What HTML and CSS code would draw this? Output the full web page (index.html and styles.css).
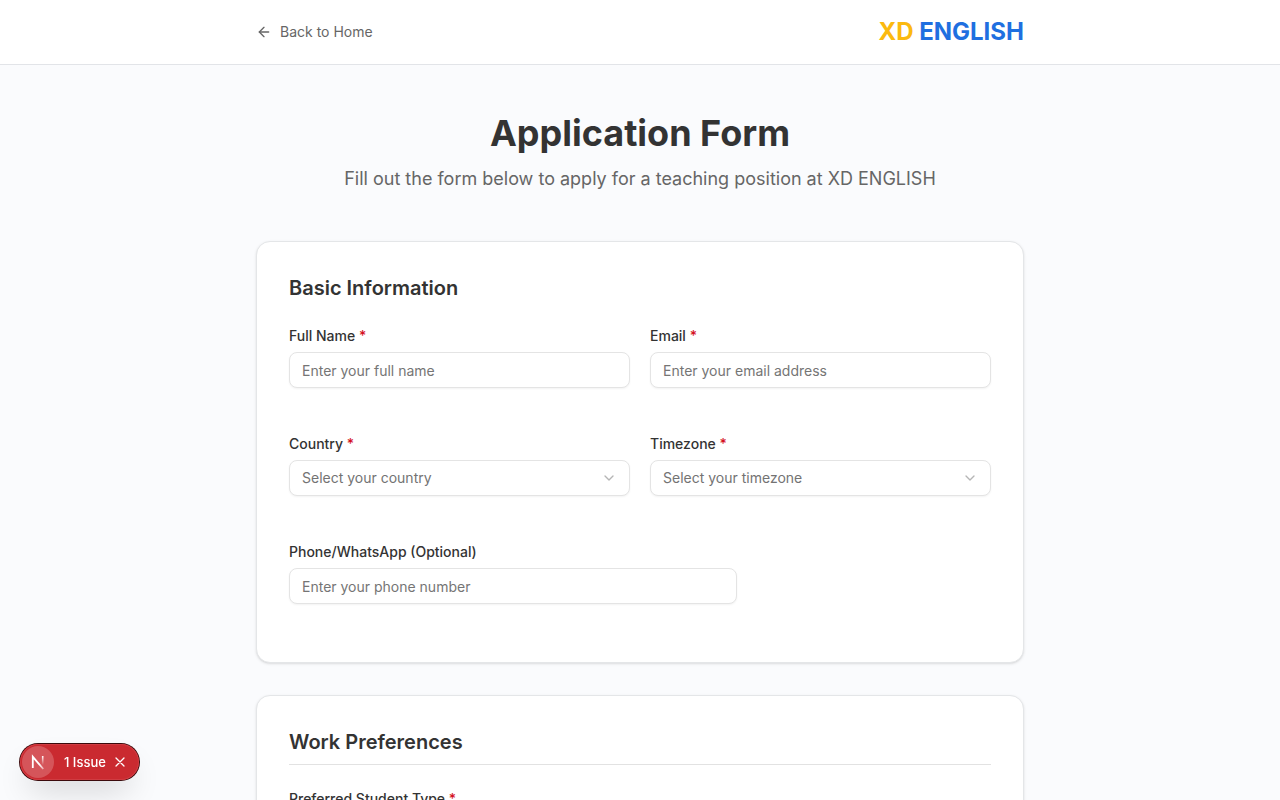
FILE: index.html
```html
<!DOCTYPE html>
<html lang="en">
<head>
<meta charset="UTF-8">
<meta name="viewport" content="width=device-width, initial-scale=1.0">
<title>Application Form</title>
<link rel="stylesheet" href="styles.css">
</head>
<body>
  <header class="site-header">
    <div class="container header-inner">
      <a class="back-link" href="#">
        <svg width="16" height="16" viewBox="0 0 24 24" fill="none" stroke="currentColor" stroke-width="2" stroke-linecap="round" stroke-linejoin="round" aria-hidden="true"><path d="m12 19-7-7 7-7"/><path d="M19 12H5"/></svg>
        Back to Home
      </a>
      <div class="logo"><span class="logo-xd">XD</span> ENGLISH</div>
    </div>
  </header>

  <main class="container">
    <div class="page-title">
      <h1>Application Form</h1>
      <p>Fill out the form below to apply for a teaching position at XD ENGLISH</p>
    </div>

    <form>
      <section class="card">
        <h2>Basic Information</h2>
        <div class="fields">
          <div class="field">
            <label for="fullName">Full Name <span class="required">*</span></label>
            <input type="text" id="fullName" name="fullName" placeholder="Enter your full name">
            <p class="field-error"></p>
          </div>
          <div class="field">
            <label for="email">Email <span class="required">*</span></label>
            <input type="email" id="email" name="email" placeholder="Enter your email address">
            <p class="field-error"></p>
          </div>
          <div class="field">
            <label for="country">Country <span class="required">*</span></label>
            <div class="select">
              <select id="country" name="country">
                <option value="">Select your country</option>
              </select>
              <svg width="16" height="16" viewBox="0 0 24 24" fill="none" stroke="currentColor" stroke-width="2" stroke-linecap="round" stroke-linejoin="round" aria-hidden="true"><path d="m6 9 6 6 6-6"/></svg>
            </div>
            <p class="field-error"></p>
          </div>
          <div class="field">
            <label for="timezone">Timezone <span class="required">*</span></label>
            <div class="select">
              <select id="timezone" name="timezone">
                <option value="">Select your timezone</option>
              </select>
              <svg width="16" height="16" viewBox="0 0 24 24" fill="none" stroke="currentColor" stroke-width="2" stroke-linecap="round" stroke-linejoin="round" aria-hidden="true"><path d="m6 9 6 6 6-6"/></svg>
            </div>
            <p class="field-error"></p>
          </div>
          <div class="field field-wide">
            <label for="phone">Phone/WhatsApp (Optional)</label>
            <input type="tel" id="phone" name="phone" placeholder="Enter your phone number">
            <p class="field-error"></p>
          </div>
        </div>
      </section>

      <section class="card">
        <h2 class="ruled">Work Preferences</h2>
        <fieldset>
          <legend>Preferred Student Type <span class="required">*</span></legend>
        </fieldset>
      </section>
    </form>
  </main>

  <div class="issues">
    <button type="button" class="issues-logo" aria-label="Open dev tools">
      <svg width="32" height="32" viewBox="0 0 32 32" fill="none" aria-hidden="true">
        <defs>
          <linearGradient id="fadeDiagonal" x1="19" y1="17" x2="23" y2="23" gradientUnits="userSpaceOnUse">
            <stop stop-color="#fff"/>
            <stop offset="1" stop-color="#fff" stop-opacity="0.4"/>
          </linearGradient>
          <linearGradient id="fadeStem" x1="21" y1="10" x2="21" y2="19" gradientUnits="userSpaceOnUse">
            <stop stop-color="#fff"/>
            <stop offset="1" stop-color="#fff" stop-opacity="0"/>
          </linearGradient>
        </defs>
        <path d="M10.8 22V10.8L21.3 23" stroke="url(#fadeDiagonal)" stroke-width="1.8"/>
        <path d="M20.7 10v9" stroke="url(#fadeStem)" stroke-width="1.6"/>
      </svg>
    </button>
    <button type="button" class="issues-open">1 Issue</button>
    <button type="button" class="issues-close" aria-label="Close">
      <svg width="10" height="10" viewBox="0 0 10 10" stroke="currentColor" stroke-width="1.3" stroke-linecap="round" aria-hidden="true"><path d="M1 1l8 8M9 1L1 9"/></svg>
    </button>
  </div>
</body>
</html>
```
FILE: styles.css
```css
* {
  box-sizing: border-box;
}
body {
  margin: 0;
  font-family: Inter, sans-serif;
  font-size: 14px;
  line-height: 20px;
  color: #333;
  background-color: #fafbfd;
}
h1, h2, p {
  margin: 0;
}
button, input, select {
  font: inherit;
}
.container {
  max-width: 768px;
  margin: 0 auto;
}

/* header */
.site-header {
  background-color: #fff;
  border-bottom: 1px solid #e2e4e8;
}
.header-inner {
  display: flex;
  align-items: center;
  justify-content: space-between;
  padding: 16px 0;
}
.back-link {
  display: flex;
  align-items: center;
  gap: 8px;
  color: #666;
  text-decoration: none;
}
.logo {
  font-size: 24px;
  line-height: 32px;
  font-weight: 700;
  color: #1f6fe0;
}
.logo-xd {
  color: #fbb90f;
}

/* title */
main {
  padding: 48px 0;
}
.page-title {
  text-align: center;
  margin-bottom: 48px;
}
.page-title h1 {
  font-size: 36px;
  line-height: 40px;
  font-weight: 700;
  margin-bottom: 12px;
}
.page-title p {
  font-size: 18px;
  line-height: 28px;
  color: #666;
}

/* form */
.card {
  background-color: #fff;
  border: 1px solid #e4e6e8;
  border-radius: 14px;
  padding: 32px;
  margin-bottom: 32px;
  box-shadow: 0 1px 3px rgba(0,0,0,0.1), 0 1px 2px -1px rgba(0,0,0,0.1);
}
.card h2 {
  font-size: 20px;
  line-height: 28px;
  font-weight: 600;
  margin-bottom: 24px;
}
.card h2.ruled {
  padding-bottom: 8px;
  border-bottom: 1px solid #e2e2e2;
}
.fields {
  display: grid;
  grid-template-columns: 1fr 1fr;
  gap: 20px;
}
.field {
  display: flex;
  flex-direction: column;
  gap: 6px;
}
.field-wide {
  grid-column: 1 / -1;
}
.field-wide input {
  max-width: 448px;
}
.field-error {
  min-height: 20px;
  color: #d4183d;
}
label, legend {
  font-weight: 500;
}
.required {
  color: #d4101e;
}
.field input, .select select {
  width: 100%;
  height: 36px;
  padding: 0 12px;
  color: #333;
  background-color: #fff;
  border: 1px solid #e4e4e4;
  border-radius: 8px;
  box-shadow: 0 1px 2px rgba(0,0,0,0.05);
}
.field input::placeholder {
  color: #757575;
}
.select {
  position: relative;
}
.select select {
  display: block;
  appearance: none;
  color: #737373;
}
.select svg {
  position: absolute;
  top: 10px;
  right: 13px;
  color: #b5b5b5;
  pointer-events: none;
}
fieldset {
  margin: 0;
  padding: 0;
  border: none;
}
legend {
  padding: 0;
}

/* issue badge */
.issues {
  position: fixed;
  left: 20px;
  bottom: 20px;
  display: flex;
  align-items: center;
  height: 36px;
  padding: 2px;
  border-radius: 18px;
  background-color: #ca2a30;
  box-shadow: 0 0 0 1px #3b0a0c, inset 0 0 0 1px #d03c42, 0 16px 32px -8px rgba(0,0,0,0.2);
}
.issues button {
  padding: 0;
  border: none;
  background: none;
  color: #fff;
  cursor: pointer;
}
.issues .issues-logo {
  width: 32px;
  height: 32px;
  border-radius: 50%;
  background-color: #d5555a;
}
.issues-logo svg {
  display: block;
}
.issues .issues-open {
  font-size: 13px;
  font-weight: 500;
  margin-left: 10px;
}
.issues .issues-close {
  display: flex;
  margin: 0 12px 0 9px;
}
```
